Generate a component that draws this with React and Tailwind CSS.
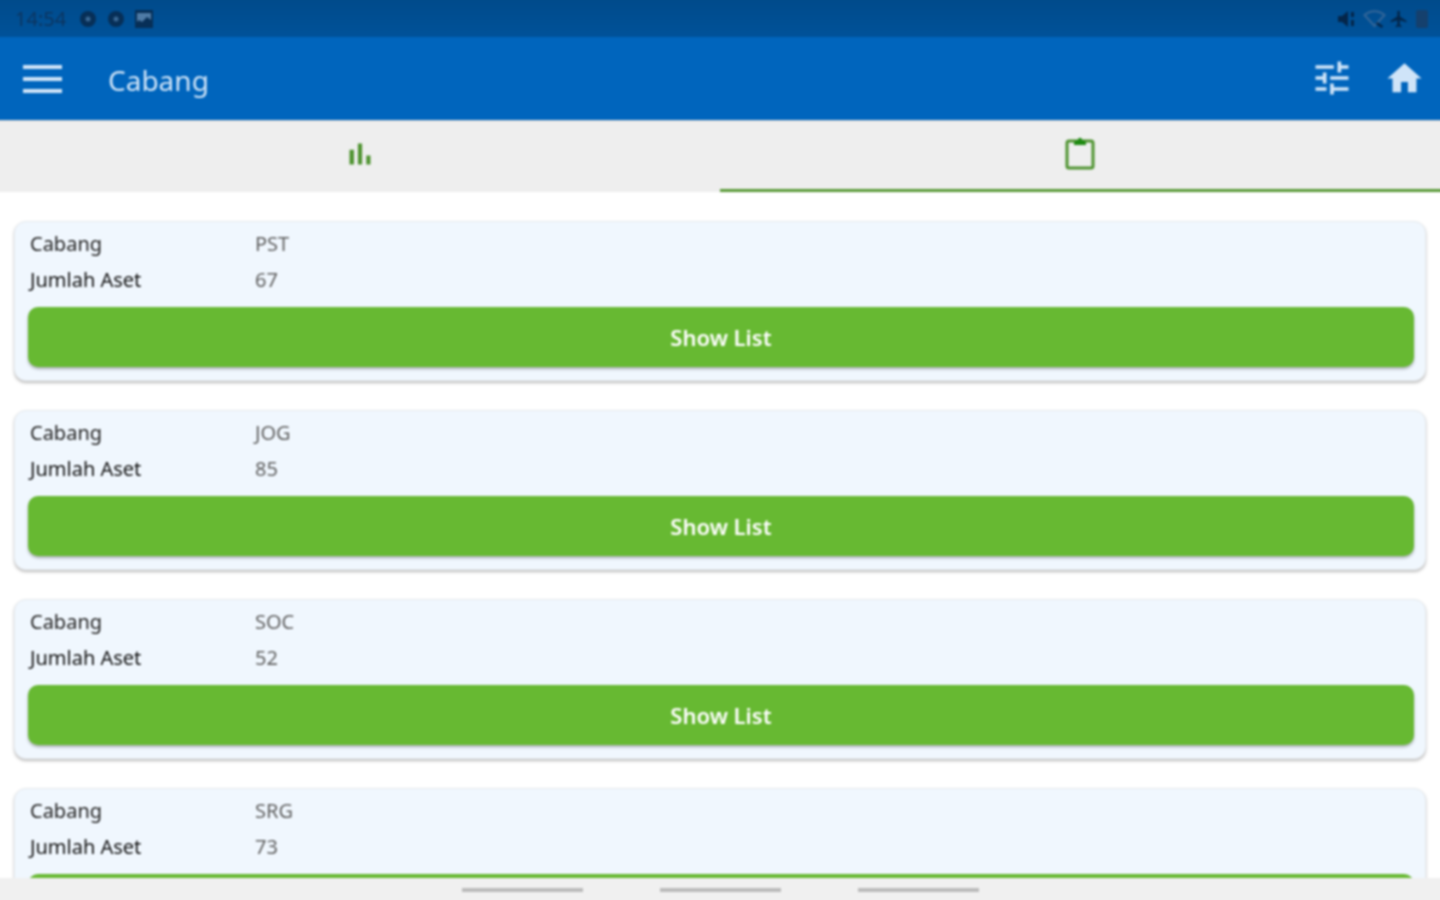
const branches = [
  { code: 'PST', total: 67 },
  { code: 'JOG', total: 85 },
  { code: 'SOC', total: 52 },
  { code: 'SRG', total: 73 },
];

function StatusBar() {
  return (
    <div className="h-[41px] pt-[4px] shrink-0 flex items-center justify-between pl-[19px] pr-[16px] bg-gradient-to-b from-[#004a8a] to-[#005299]">
      <div className="flex items-center">
        <span className="text-[20px] leading-none w-[64px] text-[#0c3560]">14:54</span>
        <svg className="w-[18px] h-[18px] mr-[10px]" viewBox="0 0 18 18">
          <circle cx="9" cy="9" r="8" fill="#072f57" />
          <circle cx="9" cy="9" r="2.5" fill="#3a6894" />
        </svg>
        <svg className="w-[18px] h-[18px] mr-[10px]" viewBox="0 0 18 18">
          <circle cx="9" cy="9" r="8" fill="#072f57" />
          <circle cx="9" cy="9" r="2.5" fill="#3a6894" />
        </svg>
        <svg className="w-[18px] h-[18px]" viewBox="0 0 18 18">
          <path d="M0 0h18v18H0z" fill="#072f57" />
          <path d="M2 3h14v7l-4-3-5 5-3-2-2 2z" fill="#4f7ba6" />
        </svg>
      </div>
      <div className="flex items-center">
        <svg className="w-[19px] h-[18px] mr-[6px]" viewBox="0 0 19 18" fill="#04264a">
          <path d="M0 6h4l6-5v16l-6-5H0z" />
          <path d="M13 2h3v5h-3zM13 10h3v6h-3z" />
        </svg>
        <svg className="w-[23px] h-[18px] mr-[3px]" viewBox="0 0 22 18" fill="none" stroke="#336699" strokeWidth="2">
          <path d="M1 5c6-5 14-5 20 0L11 16z" />
          <path d="M13 13l6 4" stroke="#04264a" strokeWidth="2.5" />
        </svg>
        <svg className="w-[20px] h-[20px] mr-[7px]" viewBox="0 0 24 24" fill="#04264a">
          <path d="M21 16v-2l-8-5V3.500C13 2.670 12.330 2 11.500 2S10 2.670 10 3.500V9l-8 5v2l8-2.500V19l-2 1.500V22l3.500-1 3.500 1v-1.500L13 19v-5.500z" />
        </svg>
        <div className="w-[12px] h-[18px] rounded-[2px] bg-[#15406d]" />
      </div>
    </div>
  );
}

function AppBar() {
  return (
    <header className="h-[83px] shrink-0 flex items-center bg-[#0065bd] text-[#cfe4f8]">
      <div className="ml-[27px] w-[39px] flex flex-col gap-[8px]">
        <div className="h-[4px] bg-[#cfe4f8]" />
        <div className="h-[4px] bg-[#cfe4f8]" />
        <div className="h-[4px] bg-[#cfe4f8]" />
      </div>
      <h1 className="ml-[46px] pt-[3px] text-[28px] leading-none flex-1">Cabang</h1>
      <svg className="w-[44px] h-[44px] mr-[30px] mb-[2px]" viewBox="0 0 24 24" fill="currentColor">
        <path d="M3 17v2h6v-2H3zM3 5v2h10V5H3zm10 16v-2h8v-2h-8v-2h-2v6h2zM7 9v2H3v2h4v2h2V9H7zm14 4v-2H11v2h10zm-6-4h2V7h4V5h-4V3h-2v6z" />
      </svg>
      <svg className="w-[41px] h-[41px] mr-[19px]" viewBox="0 0 24 24" fill="currentColor">
        <path d="M10 20v-6h4v6h5v-8h3L12 3 2 12h3v8z" />
      </svg>
    </header>
  );
}

function Tabs() {
  return (
    <div className="h-[72px] shrink-0 flex bg-[#eeeeee] border-t border-[#c9ccd0]">
      <div className="w-1/2 flex items-center justify-center pl-[4px] pb-[6px]">
        <svg className="w-[36px] h-[36px]" viewBox="0 0 24 24" fill="#4f9331">
          <path d="M5 9.200h3V19H5zM10.600 5h2.800v14h-2.800zm5.600 8H19v6h-2.800z" />
        </svg>
      </div>
      <div className="w-1/2 flex items-center justify-center border-b-[3px] border-[#5a9a38] pr-[4px] pb-[5px]">
        <svg className="w-[30px] h-[34px]" viewBox="0 0 30 34" fill="none">
          <rect x="2" y="5" width="26" height="27" rx="2" stroke="#4f9331" strokeWidth="3" />
          <path d="M9 7c0-2 3-3 4-3 0-3 4-3 4 0 1 0 4 1 4 3v2H9z" fill="#1f8a12" />
        </svg>
      </div>
    </div>
  );
}

function BranchCard({ code, total }) {
  return (
    <div className="h-[160px] shrink-0 rounded-[12px] bg-[#f0f7fe] border border-[#e6eaee] shadow-[0_2px_3px_rgba(0,0,0,0.25)] pl-[13px] pr-[11px] pt-[4px]">
      <div className="grid grid-cols-[225px_1fr] pl-[2px] text-[20px] leading-[36px]">
        <span className="text-[#222222]">Cabang</span>
        <span className="text-[#5f5f5f]">{code}</span>
        <span className="text-[#111111]">Jumlah Aset</span>
        <span className="text-[#5f5f5f]">{total}</span>
      </div>
      <button className="mt-[9px] w-full h-[60px] pt-[1px] rounded-[10px] bg-[#67b932] text-white text-[22px] font-semibold shadow-[0_2px_3px_rgba(0,0,0,0.3)]">
        Show List
      </button>
    </div>
  );
}

export default function App() {
  return (
    <div className="h-[900px] overflow-hidden">
      {/* blur bleeds past the window so the edges stay solid */}
      <div className="h-[908px] -mt-[4px] -mx-[4px] flex flex-col bg-white blur-[0.8px] font-['Noto_Sans',sans-serif]">
        <StatusBar />
        <AppBar />
        <Tabs />
        <main className="flex-1 min-h-0 overflow-hidden flex flex-col gap-[29px] pt-[29px] px-[18px]">
          {branches.map((b) => (
            <BranchCard key={b.code} code={b.code} total={b.total} />
          ))}
        </main>
        <footer className="h-[26px] shrink-0 flex items-center justify-center gap-[77px] bg-[#f0f0f0] pb-[2px]">
          <div className="w-[121px] h-[4px] bg-[#bbbbbb]" />
          <div className="w-[121px] h-[4px] bg-[#bbbbbb]" />
          <div className="w-[121px] h-[4px] bg-[#bbbbbb]" />
        </footer>
      </div>
    </div>
  );
}
